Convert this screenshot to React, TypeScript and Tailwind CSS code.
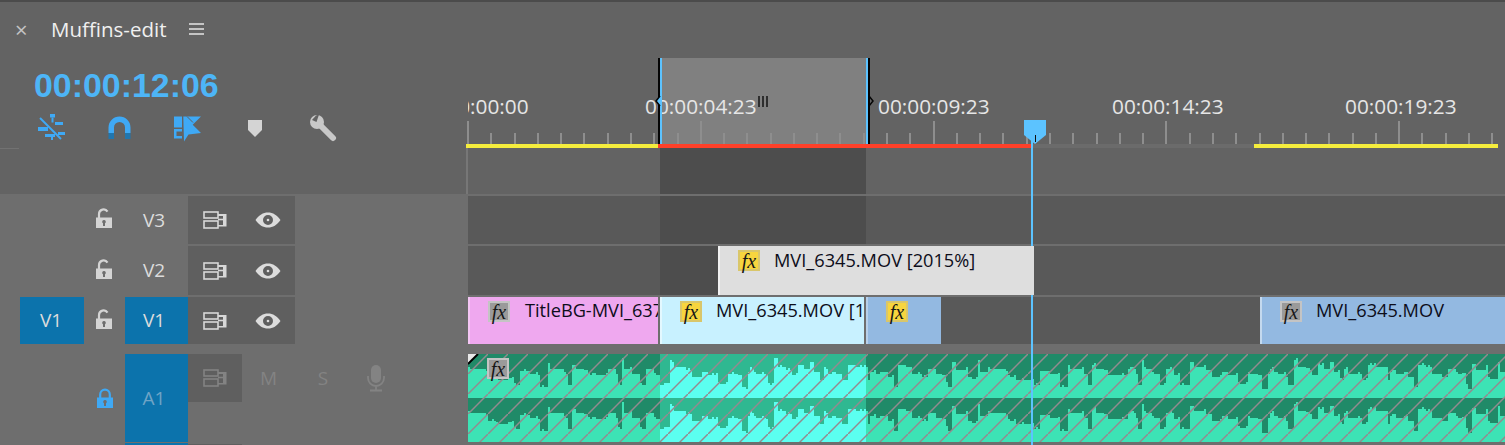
import React from "react";

const ui = "font-['Open_Sans',sans-serif]";

const TrackOutputIcon = ({ dim = false }: { dim?: boolean }) => (
  <svg width="24" height="18" viewBox="0 0 24 18" className={dim ? "text-[#838383]" : "text-[#d8d8d8]"}>
    <rect x="1" y="1" width="14" height="6" fill="none" stroke="currentColor" strokeWidth="1.600" />
    <rect x="1" y="10" width="14" height="7" fill="none" stroke="currentColor" strokeWidth="1.600" />
    <path fillRule="evenodd" d="M15 3h8.500v12.500H15v-1.500h5V5h-5z" fill="currentColor" />
    <path d="M15 8.500h5" stroke="currentColor" strokeWidth="1.600" />
  </svg>
);

const EyeIcon = () => (
  <svg width="26" height="16" viewBox="0 0 26 16">
    <path
      fillRule="evenodd"
      d="M0.500 8C4 3 8 .5 13 .5S22 3 25.500 8C22 13 18 15.500 13 15.500S4 13 .5 8zM13 3a5 5 0 1 0 0 10 5 5 0 0 0 0-10z"
      fill="#dcdcdc"
    />
    <circle cx="13" cy="8" r="1.300" fill="#dcdcdc" />
  </svg>
);

const LockIcon = ({ open = true }: { open?: boolean }) => (
  <svg width="18" height="21" viewBox="0 0 18 21">
    <path
      d={open ? "M4 10V6a4.600 4.600 0 0 1 8.500-2.400" : "M4.200 10V6.500a4.800 4.800 0 0 1 9.600 0V10"}
      fill="none"
      stroke={open ? "#d4d4d4" : "#3fa9f5"}
      strokeWidth="2.200"
    />
    <path
      fillRule="evenodd"
      d="M1 9.500h16v10.500H1zM9 12a1.800 1.800 0 0 0-1 3.300V18h2v-2.700A1.800 1.800 0 0 0 9 12z"
      fill={open ? "#d4d4d4" : "#3fa9f5"}
    />
  </svg>
);

const MicIcon = () => (
  <svg width="18" height="27" viewBox="0 0 18 27">
    <rect x="4" y="0" width="10" height="18" rx="5" fill="#838383" />
    <path d="M1 11v2a8 8 0 0 0 16 0v-2M9 21v4M3 25.500h12" fill="none" stroke="#838383" strokeWidth="1.800" />
  </svg>
);

const NestIcon = () => (
  <svg width="28" height="26" viewBox="0 0 28 26">
    <g fill="#3fa9f5">
      <rect x="12" y="0" width="5" height="3.500" />
      <rect x="13.500" y="3.500" width="2" height="5" />
      <rect x="17" y="8" width="8" height="3" />
      <rect x="0" y="13" width="10" height="4" />
      <rect x="20" y="18" width="7" height="3" />
      <rect x="7" y="20" width="10" height="3" />
      <rect x="13" y="23" width="2" height="3" />
    </g>
    <path d="M2 4l21 21" stroke="#3fa9f5" strokeWidth="2" />
  </svg>
);

const MagnetIcon = () => (
  <svg width="23" height="24" viewBox="0 0 23 24">
    <path d="M0.500 17V11.500a11 11 0 0 1 22 0V17h-5.500v-5.500a5.500 5.500 0 0 0-11 0V17z" fill="#3fa9f5" />
    <rect x="0.500" y="17" width="5.500" height="6" fill="#2176ae" />
    <rect x="17" y="17" width="5.500" height="6" fill="#2176ae" />
  </svg>
);

const LinkedIcon = () => (
  <svg width="28" height="27" viewBox="0 0 28 27">
    <g fill="#3fa9f5">
      <rect x="0" y="0.500" width="8" height="11" />
      <path fillRule="evenodd" d="M0 13h8v9.500H0zM2.500 15.500v4.500h5.500v-4.500z" />
      <path d="M9.300 0.500H27L18.700 8.700 27 17 14.500 18.500 10 25.500z" />
    </g>
    <path d="M13 0.500l6 6" stroke="#636363" strokeWidth="1" />
  </svg>
);

const MarkerIcon = () => (
  <svg width="14" height="17" viewBox="0 0 14 17">
    <path d="M0 0h14v10l-7 7-7-7z" fill="#d4d4d4" />
  </svg>
);

const WrenchIcon = () => (
  <svg width="28" height="29" viewBox="0 0 28 29">
    <circle cx="8" cy="8" r="7" fill="#c8c8c8" />
    <path d="M11 11l13 13" stroke="#c8c8c8" strokeWidth="6" strokeLinecap="round" />
    <path d="M7.500 8L3 6 7 1.500 10 .5z" fill="#636363" />
  </svg>
);

const Fx = ({ gray = false }: { gray?: boolean }) => (
  <span
    className={`flex h-[21px] w-[22px] shrink-0 items-center justify-center border-2 font-['Liberation_Serif',serif] text-[20px] italic leading-none text-[#161616] ${
      gray ? "border-[#c4c4c4] bg-[#9a9a9a]" : "border-[#d9c66a] bg-[#f7d53e]"
    }`}
  >
    fx
  </span>
);

const Clip = ({
  width,
  bg,
  edge,
  label,
  labelGap = 14,
  labelTop = -2,
  gray,
}: {
  width: number;
  bg: string;
  edge: string;
  label?: string;
  labelGap?: number;
  labelTop?: number;
  gray?: boolean;
}) => (
  <div
    className={`relative z-10 flex shrink-0 items-start overflow-hidden border-l-2 pl-[18px] pt-[4px] ${ui} whitespace-nowrap text-[18.200px] leading-[22px] text-[#0d0d1a]`}
    style={{ width, backgroundColor: bg, borderColor: edge }}
  >
    <Fx gray={gray} />
    {label && <span style={{ marginLeft: labelGap, marginTop: labelTop }}>{label}</span>}
  </div>
);

const TrackHeader = ({ name, source }: { name: string; source?: boolean }) => (
  <div className={`flex w-[468px] shrink-0 items-stretch ${ui} text-[19px] text-[#dcdcdc]`}>
    <div className="w-[20px]" />
    <div className={`flex w-[64px] items-center justify-center pr-[2px] ${source ? "bg-[#0c73ac]" : ""}`}>{source && "V1"}</div>
    <div className="flex w-[41px] items-center justify-center pb-[3px] pr-[1px]">
      <LockIcon />
    </div>
    <div className={`flex w-[63px] items-center justify-center pr-[5px] ${source ? "bg-[#0c73ac]" : ""}`}>{name}</div>
    <div className="flex w-[107px] items-center justify-start bg-[#5f5f5f]">
      <div className="flex w-[53px] justify-center pl-[1px]">
        <TrackOutputIcon />
      </div>
      <div className="flex w-[54px] justify-center">
        <EyeIcon />
      </div>
    </div>
  </div>
);

// x, y read off the reference at 3x, y measured from the clip top
const wavePoints = [
  [0, 50], [30, 52], [50, 58], [55, 75], [80, 85], [130, 80], [135, 100], [155, 58], [185, 65], [205, 70], [215, 105],
  [235, 38], [245, 50], [265, 50], [285, 65], [295, 100], [310, 38], [320, 50], [345, 55], [360, 70], [400, 70],
  [415, 50], [440, 65], [445, 100], [460, 25], [468, 50], [490, 65], [515, 100], [530, 50], [555, 70], [575, 100],
  [590, 100], [605, 30], [615, 45], [650, 55], [670, 75], [700, 60], [720, 70], [750, 95], [780, 65], [810, 70],
  [820, 110], [835, 65], [845, 50], [855, 65], [890, 75], [900, 100], [915, 25], [930, 45], [950, 55], [970, 70],
  [985, 90], [990, 40], [1005, 50], [1025, 30], [1035, 60], [1055, 85], [1065, 50], [1080, 65], [1110, 65], [1120, 85],
  [1140, 40], [1160, 45], [1185, 45], [1195, 85], [1205, 60], [1220, 65], [1245, 60], [1260, 75], [1275, 105],
  [1290, 40], [1310, 45], [1330, 65], [1360, 75], [1380, 50], [1400, 65], [1420, 70], [1430, 95], [1440, 110],
  [1450, 35], [1460, 55], [1490, 45], [1500, 80], [1525, 30], [1535, 60],
];

const waveform = (() => {
  let seed = 41;
  const rnd = () => {
    seed = (seed * 16807) % 2147483647;
    return seed / 2147483647;
  };
  const period = 1560; // in 3x units, tiled across the clip
  const out: number[] = [];
  for (let i = 0; i < 520; i++) {
    const at = (i * 6) % period;
    let top = wavePoints[0][1];
    for (const [x, y] of wavePoints) {
      if (x <= at) top = y;
    }
    const h = (132 - top) / 3 + 2 + (rnd() < 0.2 ? 2 : 0);
    out.push(Math.max(6, Math.round(h)));
  }
  return out;
})();

const wavePath = (baseline: number) =>
  `M0 ${baseline}` +
  waveform.map((h, i) => `V${baseline - h}H${(i + 1) * 2}`).join("") +
  `V${baseline}Z`;

const AudioClip = () => (
  <svg width="1037" height="88" viewBox="0 0 1037 88" className="absolute left-0 top-0" shapeRendering="crispEdges">
    <defs>
      <pattern id="hatch" width="20" height="20" patternUnits="userSpaceOnUse">
        <path d="M-1 21L21 -1" stroke="#948a8e" strokeWidth="1.500" shapeRendering="auto" />
      </pattern>
      <clipPath id="inRange">
        <rect x="192" y="0" width="206" height="88" />
      </clipPath>
    </defs>
    <rect width="1037" height="88" fill="#208a68" />
    <path d={wavePath(44)} fill="#3de3b5" />
    <path d={wavePath(88)} fill="#3de3b5" />
    <g clipPath="url(#inRange)">
      <rect width="1037" height="88" fill="#2fb891" />
      <path d={wavePath(44)} fill="#5bfff0" />
      <path d={wavePath(88)} fill="#5bfff0" />
    </g>
    <rect width="1037" height="88" fill="url(#hatch)" />
    <path d="M0 0h10L0 10z" fill="#e8e8e8" />
    <path d="M0 10L10 0" stroke="#000" strokeWidth="2" shapeRendering="auto" />
  </svg>
);

const Ruler = () => {
  const ticks: React.ReactNode[] = [];
  for (let i = 0; i < 45; i++) {
    const x = Math.round(1 + i * 23.28);
    const major = i % 10 === 0;
    ticks.push(
      <rect key={i} x={x} y={major ? 119 : 131} width="2" height={major ? 23 : 11} fill="#8e8e8e" />,
    );
  }
  return (
    <svg width="1039" height="146" className="absolute left-0 top-0">
      {ticks}
    </svg>
  );
};

const labels = [
  { t: "00:00:00:00", left: -51 },
  { t: "00:00:04:23", left: 177 },
  { t: "00:00:09:23", left: 410 },
  { t: "00:00:14:23", left: 644 },
  { t: "00:00:19:23", left: 877 },
];

export default function App() {
  return (
    <div className="relative flex h-[445px] w-[1505px] flex-col overflow-hidden bg-[#6e6e6e]">
      <div className="h-[2px] shrink-0 bg-[#4b4b4b]" />

      <div className="flex h-[192px] shrink-0 bg-[#636363]">
        {/* sequence tab, timecode and tools */}
        <div className="relative flex w-[466px] shrink-0 flex-col">
          <div className={`flex h-[54px] items-center ${ui} text-[#f0f0f0]`}>
            <span className="ml-[15px] w-[36px] text-[22px] leading-none text-[#c4c4c4]">×</span>
            <span className="text-[20.500px] leading-none">Muffins-edit</span>
            <div className="ml-[23px] flex w-[15px] flex-col gap-[3px]">
              <div className="h-[2px] bg-[#c4c4c4]" />
              <div className="h-[2px] bg-[#c4c4c4]" />
              <div className="h-[2px] bg-[#c4c4c4]" />
            </div>
          </div>
          <div className="ml-[34px] mt-[9px] font-['Liberation_Sans',sans-serif] text-[33.900px] font-bold leading-[40px] text-[#4db5f7]">
            00:00:12:06
          </div>
          <div className="relative mt-[9px] h-[30px]">
            <div className="absolute left-[38px] top-0"><NestIcon /></div>
            <div className="absolute left-[108px] top-[2px]"><MagnetIcon /></div>
            <div className="absolute left-[174px] top-[2px]"><LinkedIcon /></div>
            <div className="absolute left-[248px] top-[6px]"><MarkerIcon /></div>
            <div className="absolute left-[309px] top-0"><WrenchIcon /></div>
          </div>
          <div className="absolute left-0 top-[146px] h-[1px] w-[19px] bg-[#727272]" />
        </div>

        {/* ruler */}
        <div className="relative flex-1 overflow-hidden">
          <div className="absolute left-[193px] top-[56px] h-[90px] w-[209px] bg-[#808080]" />
          <Ruler />
          <div className={`absolute left-[2px] top-0 h-[146px] w-[1037px] overflow-hidden ${ui} text-[20.800px] leading-none text-[#e6e6e6]`}>
            {labels.map((l) => (
              <span key={l.t} className="absolute top-[94px]" style={{ left: l.left }}>
                {l.t}
              </span>
            ))}
          </div>
          <div className="absolute left-[292px] top-[94px] flex h-[11px] gap-[2px]">
            <div className="w-[2px] bg-[#2e2e2e]" />
            <div className="w-[2px] bg-[#2e2e2e]" />
            <div className="w-[2px] bg-[#2e2e2e]" />
          </div>
          {/* in and out handles */}
          <div className="absolute left-[192px] top-[56px] h-[90px] w-[2px] bg-[#050505]" />
          <div className="absolute left-[194px] top-[56px] h-[90px] w-[2px] bg-[#5cc3ff]" />
          <div className="absolute left-[400px] top-[56px] h-[90px] w-[2px] bg-[#5cc3ff]" />
          <div className="absolute left-[402px] top-[56px] h-[90px] w-[2px] bg-[#050505]" />
          <svg width="7" height="10" className="absolute left-[189px] top-[94px]">
            <path d="M5 0L1 5l4 5h2V0z" fill="#5cc3ff" />
            <path d="M5 0L1 5l4 5" fill="none" stroke="#050505" strokeWidth="1.500" />
          </svg>
          <svg width="7" height="10" className="absolute left-[402px] top-[94px]">
            <path d="M1 0l4 5-4 5" fill="none" stroke="#050505" strokeWidth="1.500" />
          </svg>

          {/* work area bar */}
          <div className="absolute left-0 top-[142px] flex h-[4px] w-full">
            <div className="w-[192px] bg-[#f5ed3d]" />
            <div className="w-[373px] bg-[#ff4029]" />
            <div className="w-[223px] bg-[#6b6b6b]" />
            <div className="w-[244px] bg-[#f5ed3d]" />
          </div>
          {/* empty space above the tracks */}
          <div className="absolute bottom-0 left-0 h-[46px] w-[2px] bg-[#777777]" />
          <div className="absolute bottom-0 left-[194px] h-[46px] w-[206px] bg-[#4d4d4d]" />
        </div>
      </div>

      {/* tracks */}
      <div className="mt-[2px] flex h-[48px] shrink-0">
        <TrackHeader name="V3" />
        <div className="relative flex-1 bg-[#595959]">
          <div className="absolute left-[192px] top-0 h-full w-[206px] bg-[#4d4d4d]" />
        </div>
      </div>
      <div className="mt-[2px] flex h-[49px] shrink-0">
        <TrackHeader name="V2" />
        <div className="relative flex flex-1 bg-[#595959]">
          <div className="absolute left-[192px] top-0 h-full w-[206px] bg-[#4d4d4d]" />
          <div className="w-[250px] shrink-0" />
          <Clip width={316} bg="#dedede" edge="#f2f2f2" label="MVI_6345.MOV [2015%]" labelTop={-1} />
        </div>
      </div>
      <div className="mt-[2px] flex h-[47px] shrink-0">
        <TrackHeader name="V1" source />
        <div className="flex flex-1 overflow-hidden bg-[#595959]">
          <Clip width={190} bg="#efa8ef" edge="#f4c6f4" label="TitleBG-MVI_6378.MOV" labelGap={15} gray />
          <div className="w-[2px] shrink-0 bg-[#6e6e6e]" />
          <Clip width={204} bg="#c8f1ff" edge="#e3f8ff" label="MVI_6345.MOV [1500%]" />
          <div className="w-[2px] shrink-0 bg-[#6e6e6e]" />
          <Clip width={75} bg="#93b9e1" edge="#b7d0ea" />
          <div className="w-[319px] shrink-0" />
          <Clip width={245} bg="#93b9e1" edge="#c4d9ee" label="MVI_6345.MOV" gray />
        </div>
      </div>

      <div className="mt-[10px] flex h-[88px] shrink-0">
        <div className={`flex w-[468px] shrink-0 items-stretch ${ui} text-[19px]`}>
          <div className="w-[84px]" />
          <div className="flex w-[41px] items-center justify-center pt-[1px]">
            <LockIcon open={false} />
          </div>
          <div className="flex w-[63px] items-center justify-center bg-[#0c73ac] pr-[5px] text-[#6fa4c6]">A1</div>
          <div className="flex h-[48px] w-[54px] items-center justify-center bg-[#5f5f5f]">
            <TrackOutputIcon dim />
          </div>
          <div className="flex h-[48px] w-[53px] items-center justify-center text-[#838383]">M</div>
          <div className="flex h-[48px] w-[56px] items-center justify-center text-[#838383]">S</div>
          <div className="flex h-[48px] w-[50px] items-center justify-center">
            <MicIcon />
          </div>
        </div>
        <div className="relative flex-1 overflow-hidden">
          <AudioClip />
          <div className="absolute left-[19px] top-[4px]">
            <Fx gray />
          </div>
        </div>
      </div>
      <div className="mt-[1px] flex h-[2px] shrink-0">
        <div className="ml-[125px] w-[63px] bg-[#0c73ac]" />
        <div className="mt-[1px] w-[54px] bg-[#5f5f5f]" />
      </div>

      {/* playhead */}
      <div className="absolute bottom-0 left-[1031px] top-[128px] w-[2px] bg-[#5cc3ff]" />
      <svg width="22" height="24" className="absolute left-[1024px] top-[120px]">
        <path d="M0 0h22v15l-11 9L0 15z" fill="#5cc3ff" />
        <rect x="11" y="15" width="1" height="7" fill="#111" />
      </svg>
    </div>
  );
}
